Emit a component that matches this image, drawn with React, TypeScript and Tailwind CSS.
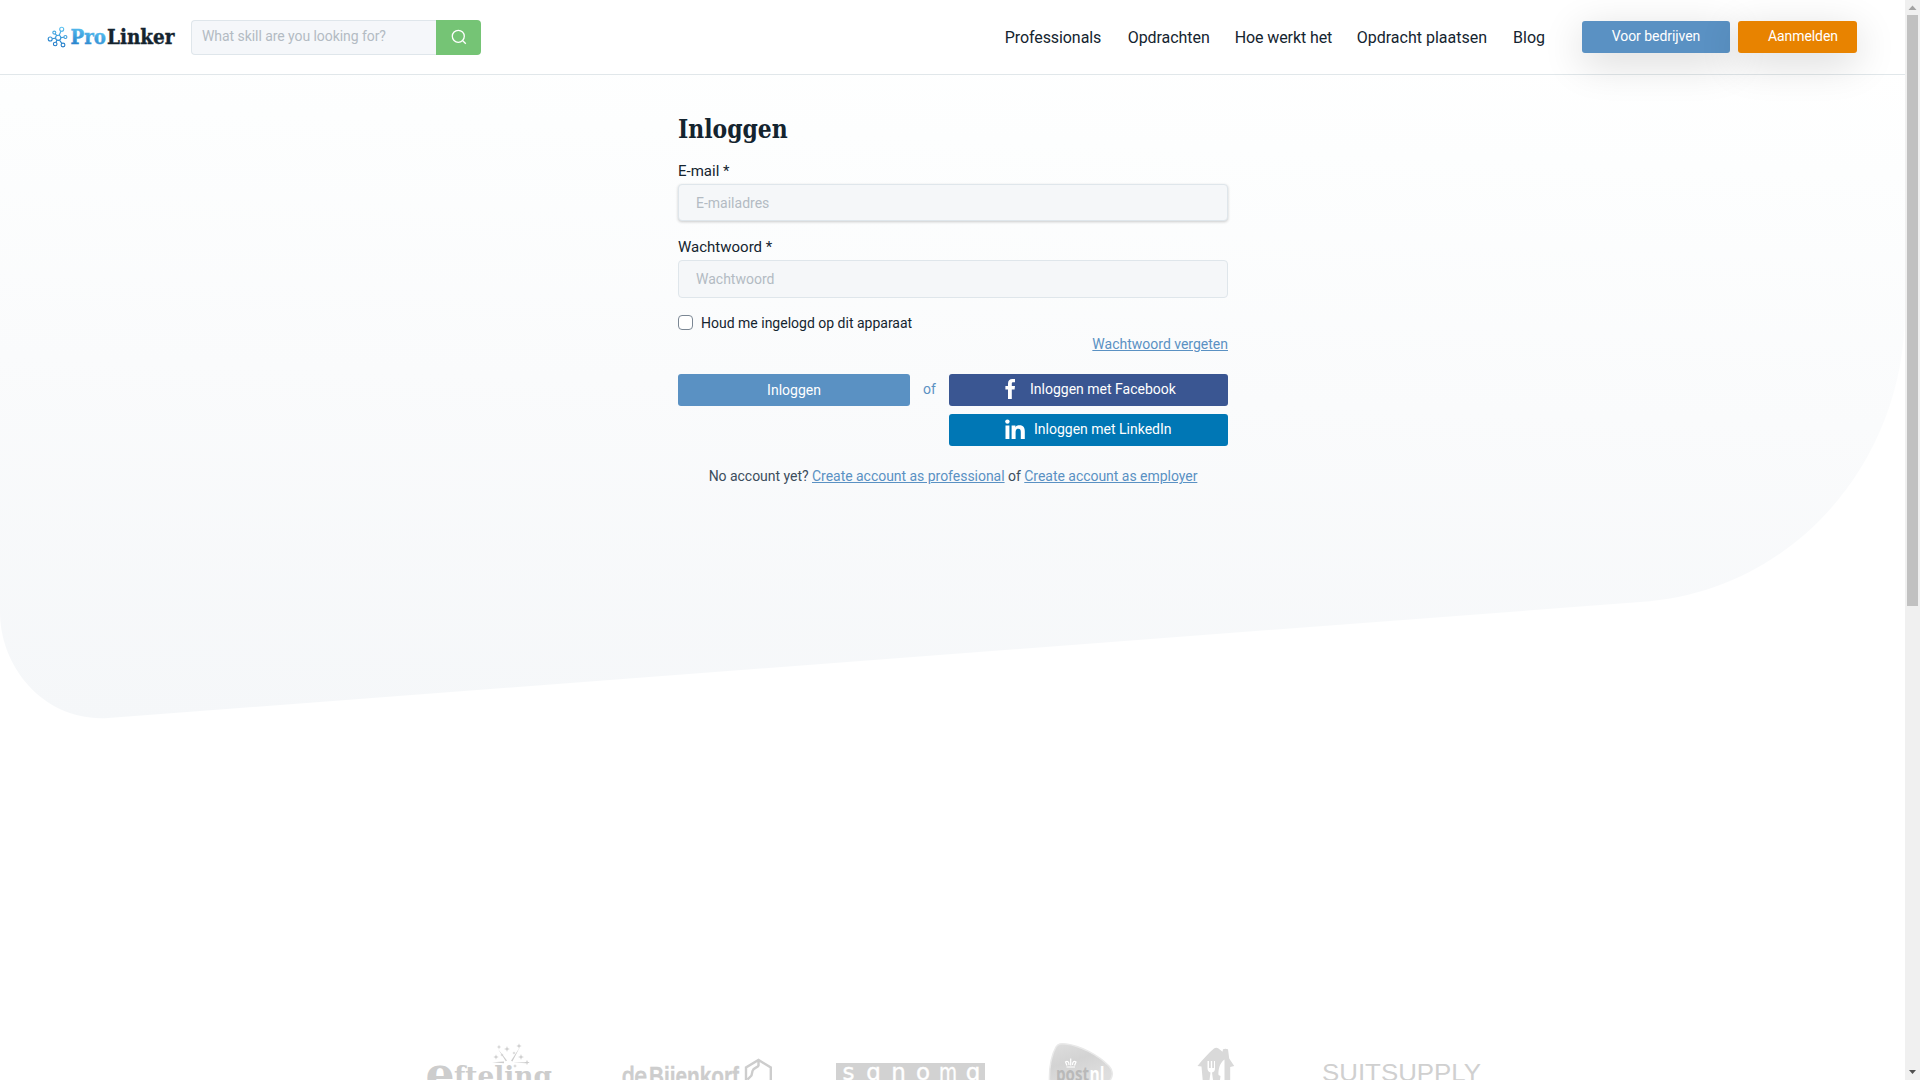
import React from "react";

const ROBOTO = "font-[Roboto,sans-serif]";

function BrandLogo() {
  const nodes: [number, number, number][] = [
    [61.7, 29.2, 2],
    [54.3, 32.6, 1.5],
    [50.2, 39, 2],
    [65.4, 37, 1.5],
    [55.2, 44, 1.8],
    [63, 45, 1.9],
  ];
  return (
    <svg className="block h-[30px] w-[130px] shrink-0" viewBox="47 22 130 30" role="img" aria-label="ProLinker">
      <defs>
        <linearGradient id="brand" x1="0.3" y1="0" x2="0" y2="1">
          <stop offset="0" stopColor="#5cc5f3" />
          <stop offset="1" stopColor="#1971c2" />
        </linearGradient>
        <linearGradient id="brandIcon" gradientUnits="userSpaceOnUse" x1="60" y1="26" x2="56" y2="47">
          <stop offset="0" stopColor="#5cc5f3" />
          <stop offset="1" stopColor="#1971c2" />
        </linearGradient>
      </defs>
      <g fill="none" stroke="url(#brandIcon)" strokeWidth="1.1">
        <circle cx="58.2" cy="37.8" r="2.6" />
        {nodes.map(([x, y, r]) => (
          <circle key={x} cx={x} cy={y} r={r} />
        ))}
        <path d="M59.2 35.3 61 31M57 35.5 55.1 33.9M55.6 38.1 52.2 38.7M60.8 37.6 63.9 37.2M57 40.1 56 42.300M59.5 40.2 61.8 43.300" />
      </g>
      <g fontFamily="'DejaVu Serif', serif" fontWeight="700" fontSize="20.5">
        <text x="70.5" y="44.4" fill="url(#brand)" stroke="url(#brand)" strokeWidth="0.4" textLength="35.5" lengthAdjust="spacingAndGlyphs">Pro</text>
        <text x="107" y="44.4" fill="#14242f" stroke="#14242f" strokeWidth="0.4" textLength="67.500" lengthAdjust="spacingAndGlyphs">Linker</text>
      </g>
    </svg>
  );
}

function Header() {
  return (
    <header className="relative flex h-[75px] items-start border-b border-[#e1e7ea] bg-white pl-[47px] pr-12">
      <div className="mt-[22px]"><BrandLogo /></div>
      <form className="ml-[14px] mt-5 flex h-[35px] w-[290px]">
        <input
          className="w-[245px] rounded-l border border-r-0 border-[#dfe6eb] bg-[#f5f7fa] pb-0.5 pl-[10px] text-[14px] tracking-[-0.06px] outline-none placeholder:text-[#b3bbc3]"
          placeholder="What skill are you looking for?"
        />
        <button type="button" aria-label="Search" className="flex w-[45px] items-center justify-center rounded-r bg-[#75c475]">
          <svg className="mb-px h-4 w-4" viewBox="0 0 16 16" fill="none" stroke="#fff" strokeWidth="1.3">
            <circle cx="7.3" cy="7.3" r="6" />
            <path d="m11.8 11.8 3 3" />
          </svg>
        </button>
      </form>
      <nav className="ml-auto mt-[25px] flex gap-[26px] whitespace-nowrap text-[16px] leading-[25px] text-[#14242f]">
        <a className="w-[97px] tracking-[-0.08px]">Professionals</a>
        <a className="w-[81px] tracking-[-0.06px]">Opdrachten</a>
        <a className="w-[96px] tracking-[-0.1px]">Hoe werkt het</a>
        <a>Opdracht plaatsen</a>
        <a>Blog</a>
      </nav>
      <div className="ml-[37px] mt-[21px] flex gap-2 text-[14px] leading-[31px] text-white">
        <a className="h-8 w-[148px] rounded-[3px] bg-[#5a91c3] text-center tracking-[-0.05px] shadow-[0_10px_40px_rgba(0,0,0,0.16)]">Voor bedrijven</a>
        <a className="h-8 w-[119px] rounded-[3px] bg-[#e88300] pl-[30px] tracking-[-0.08px] shadow-[0_10px_40px_rgba(0,0,0,0.16)]">Aanmelden</a>
      </div>
    </header>
  );
}

function LoginForm() {
  const field = "block w-full rounded border border-[#dfe6eb] bg-[#f5f7f9] pl-[17px] text-[14px] outline-none placeholder:text-[#b3bbc3]";
  const link = "text-[#5a91c3] underline";
  return (
    <form className="ml-[678px] w-[550px] pt-[36px] text-[#14242f]">
      <h1 className="h-[36px] w-max origin-left scale-x-[0.86] font-['DejaVu_Serif',serif] text-[25.5px] leading-[36px] font-bold">Inloggen</h1>
      <label className="mt-[12px] block h-[25px] text-[15px] leading-6">E-mail *</label>
      <input className={field + " h-[37px] shadow-[0_1px_3px_rgba(0,0,0,0.2)]"} placeholder="E-mailadres" />
      <label className="mt-[14px] block h-[25px] text-[15px] leading-6">Wachtwoord *</label>
      <input className={field + " h-[38px]"} placeholder="Wachtwoord" />
      <div className="mt-[16px] flex h-[17px] items-center gap-2 text-[14px]">
        <span className="h-[15px] w-[15px] rounded-[4px] border border-[#7b8794] bg-white" />
        <span className="leading-4">Houd me ingelogd op dit apparaat</span>
      </div>
      <div className="mt-[3px] text-right text-[14px] leading-5">
        <a className={link}>Wachtwoord vergeten</a>
      </div>
      <div className="mt-5 flex text-[14px] leading-[31px] text-white">
        <button type="button" className="h-8 w-[232px] rounded-[3px] bg-[#5a91c3]">Inloggen</button>
        <span className="w-[39px] text-center text-[#5a91c3]">of</span>
        <div className="flex w-[279px] flex-col gap-2">
          <button type="button" className="flex h-8 rounded-[3px] bg-[#3a5692] pl-[56px]">
            <svg className="mt-[5px] h-5 w-[11px]" viewBox="0 0 11 20" fill="#fff">
              <path d="M10 0v3.3H8.2C7 3.3 6.8 4 6.8 4.8V7H10l-.4 3.4H6.8V20H3v-9.6H.4V7H3V4.5C3 1.6 4.7 0 7.2 0Z" />
            </svg>
            <span className="ml-[14px]">Inloggen met Facebook</span>
          </button>
          <button type="button" className="flex h-8 rounded-[3px] bg-[#0077b5] pl-[56px]">
            <svg className="mt-[5px] h-5 w-5" viewBox="0 0 20 20" fill="#fff">
              <circle cx="2.4" cy="2.6" r="2.2" />
              <path d="M.5 6.5h3.9V20H.5ZM6.6 6.5h3.8v1.9c.7-1.3 2-2.2 4-2.2 4.2 0 5.4 2.6 5.4 6.4V20h-4v-6.6c0-2-.3-3.7-2.5-3.7s-2.7 1.7-2.7 3.6V20h-4Z" />
            </svg>
            <span className="ml-[9px]">Inloggen met LinkedIn</span>
          </button>
        </div>
      </div>
      <p className="mt-5 text-center text-[14px] leading-[21px] tracking-[-0.03px] text-[#3c4d5c]">
        No account yet? <a className={link}>Create account as professional</a> of <a className={link}>Create account as employer</a>
      </p>
    </form>
  );
}

function Sparkle({ x, y, s }: { x: number; y: number; s: number }) {
  return <path transform={`translate(${x} ${y}) scale(${s})`} d="M0-3 .7-.7 3 0 .7.7 0 3-.7.7-3 0-.7-.7Z" />;
}

function ClientLogos() {
  return (
    <div className="flex h-[40px] items-start overflow-hidden pl-[425px]">
      <svg className="h-10 w-[130px]" viewBox="425 1040 130 40" fill="#cdcdcd" aria-label="Efteling">
        <text x="425.5" y="1090" fontFamily="'DejaVu Serif', serif" fontWeight="700" fontSize="47" textLength="29" lengthAdjust="spacingAndGlyphs">e</text>
        <text x="454" y="1085" fontFamily="'DejaVu Serif', serif" fontWeight="700" fontSize="26.500" textLength="98" lengthAdjust="spacingAndGlyphs">fteling</text>
        <path d="m498 1049 9 11.5-1.2.8ZM520 1047l-9 13.8 1.4.6ZM492 1062.3l12-.8v1.7ZM513 1062.5l13-.3v1Z" />
        <Sparkle x={499} y={1047} s={0.8} />
        <Sparkle x={507} y={1049} s={1} />
        <Sparkle x={519} y={1046} s={0.9} />
        <Sparkle x={496} y={1057} s={0.9} />
        <Sparkle x={521} y={1057} s={1} />
        <Sparkle x={527} y={1062.5} s={0.9} />
        <Sparkle x={514} y={1053} s={0.6} />
        <Sparkle x={502} y={1055} s={0.6} />
        <Sparkle x={515} y={1066} s={0.7} />
      </svg>
      <svg className="ml-[65px] h-10 w-[155px]" viewBox="620 1040 155 40" fill="#cdcdcd" aria-label="de Bijenkorf">
        <g fontFamily="'Liberation Sans', sans-serif" fontSize="25" stroke="#cdcdcd">
          <text x="622" y="1085" strokeWidth="0.9" textLength="25" lengthAdjust="spacingAndGlyphs">de</text>
          <text x="649" y="1085" strokeWidth="0.3" fontWeight="700" textLength="90" lengthAdjust="spacingAndGlyphs">Bijenkorf</text>
        </g>
        <path d="M746 1083V1067.5l12.5-7.5 12.3 7.5V1083M758.5 1060v5.5c-1 2.5-5 2-6 5.5l-1 4.500-4 4" fill="none" stroke="#cdcdcd" strokeWidth="2.400" />
      </svg>
      <svg className="ml-[61px] h-10 w-[149px]" viewBox="836 1040 149 40" aria-label="Sanoma">
        <path d="M836 1063h149v20H836Z" fill="#d2d2d2" />
        <g fill="#fff" fontFamily="'DejaVu Sans', sans-serif" fontSize="23" stroke="#fff" strokeWidth="0.4" textAnchor="middle">
          <text x="848.5" y="1080">s</text>
          <text x="873.5" y="1080">ɑ</text>
          <text x="898.5" y="1080">n</text>
          <text x="923" y="1080">o</text>
          <text x="948" y="1080" textLength="18" lengthAdjust="spacingAndGlyphs">m</text>
          <text x="973" y="1080">ɑ</text>
        </g>
      </svg>
      <svg className="ml-[63px] h-10 w-[66px]" viewBox="1048 1040 66 40" aria-label="PostNL">
        <defs>
          <linearGradient id="post" x1="0" y1="0" x2="0.5" y2="1">
            <stop offset="0" stopColor="#dedede" />
            <stop offset="0.5" stopColor="#d3d3d3" />
            <stop offset="1" stopColor="#dedede" />
          </linearGradient>
        </defs>
        <path d="M1049.500 1082c-.5-14 2-27 6.500-35 2-3.500 5-3.500 10-3 14 1.500 32 11 43 22 5 5.500 4 10 0 16Z" fill="url(#post)" stroke="#e9e9e9" strokeWidth="1.500" />
        <path d="M1066.500 1067h8.500M1067 1065.500l-1.500-3.500c2-1.500 3.500 0 3.500 3M1074.500 1065.500l1.500-3.500c-2-1.500-3.500 0-3.500 3M1070.700 1058.500v7" fill="none" stroke="#fff" strokeWidth="1.200" />
        <g fontFamily="'Open Sans', sans-serif" fontWeight="700" fontSize="19">
          <text x="1056" y="1081" fill="#b9b9b9" textLength="33" lengthAdjust="spacingAndGlyphs">post</text>
          <text x="1089.500" y="1081" fill="#fff" textLength="15" lengthAdjust="spacingAndGlyphs">nl</text>
        </g>
      </svg>
      <svg className="ml-[83px] h-10 w-[38px]" viewBox="1197 1040 38 40" aria-label="Thuisbezorgd">
        <path d="M1197.500 1066c5-6 11-13 16.500-17.500 1.500-1.200 3-1 4.500 0l4 3.200.5-2.500c1.500-.8 3.500-.7 5 0l1.200 9.300 5 7.500-4 1v13h-27.500l-1.200-13.500Z" fill="#d9d9d9" />
        <path d="M1207.500 1061v7c0 3 1.500 4 3 4.500l-1 7.500h3.500l-1-7.500c2-.5 3-1.500 3-4.500v-7h-1v7h-1.800v-7h-1.400v7h-1.800v-7ZM1224.500 1059.500c-4.500 3-6.500 10-6 15.500l2 1-.5 4h4.500Z" fill="#fff" />
      </svg>
      <svg className="ml-[85px] h-10 w-[164px]" viewBox="1320 1040 164 40" aria-label="Suitsupply">
        <text x="1322" y="1081" fill="#d0d0d0" fontFamily="'Liberation Sans', sans-serif" fontSize="23.500" textLength="159" lengthAdjust="spacingAndGlyphs">SUITSUPPLY</text>
      </svg>
    </div>
  );
}

function Scrollbar() {
  return (
    <div className="flex h-full w-[15px] shrink-0 flex-col items-center bg-[#f0f0f0]">
      <svg className="h-[15px] w-[15px]" viewBox="0 0 15 15" fill="#a3a3a3"><path d="m7.500 5.500 4 4.500h-8Z" /></svg>
      <div className="h-[591px] w-[11px] bg-[#c1c1c1]" />
      <svg className="mt-auto h-[15px] w-[15px]" viewBox="0 0 15 15" fill="#505050"><path d="M4 5h7l-3.500 4Z" /></svg>
    </div>
  );
}

export default function App() {
  return (
    <div className={`flex h-[1080px] w-[1920px] overflow-hidden bg-white ${ROBOTO}`}>
      <div className="relative flex min-w-0 flex-1 flex-col">
        <svg className="absolute top-0 left-0 h-[760px] w-[1905px]" viewBox="0 0 1905 760" aria-hidden="true">
          <defs>
            <linearGradient id="sheet" x1="0.1" y1="0" x2="0" y2="1">
              <stop offset="0" stopColor="#ffffff" />
              <stop offset="0.15" stopColor="#fdfefe" />
              <stop offset="0.5" stopColor="#fafbfc" />
              <stop offset="1" stopColor="#f5f7f9" />
            </linearGradient>
          </defs>
          <path d="M0 0H1905V310C1905 465 1790 593 1640 602L108 718C45 722 0 668 0 612Z" fill="url(#sheet)" />
        </svg>
        <Header />
        <main className="relative flex-1">
          <LoginForm />
        </main>
        <footer className="relative"><ClientLogos /></footer>
      </div>
      <Scrollbar />
    </div>
  );
}
